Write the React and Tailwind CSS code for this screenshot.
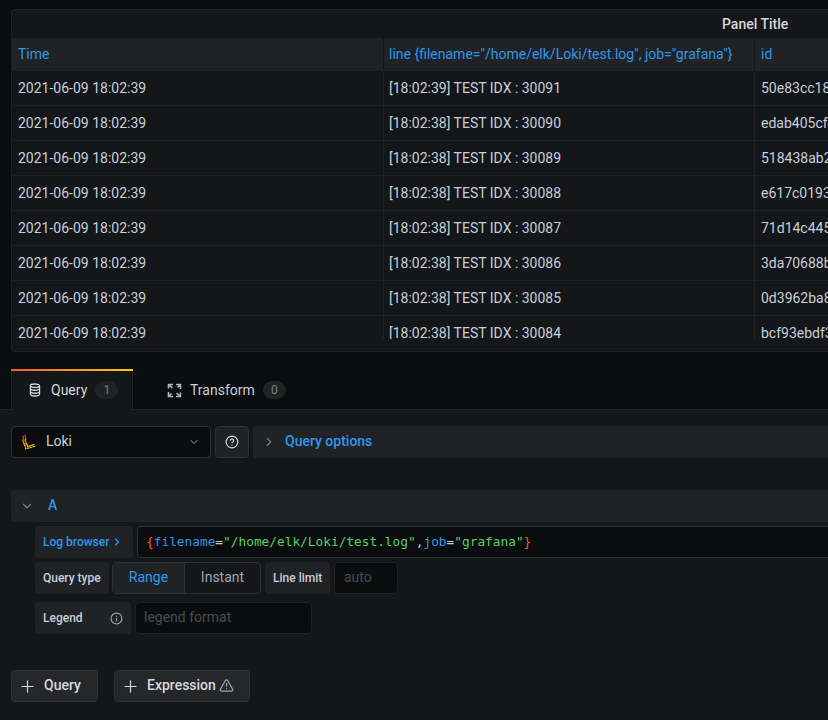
import React from "react";
import { ChevronDown, ChevronRight, CircleHelp, Info, Plus, TriangleAlert } from "lucide-react";

const rows = [
  ["[18:02:39] TEST IDX : 30091", "50e83cc18a1f"],
  ["[18:02:38] TEST IDX : 30090", "edab405cfb22"],
  ["[18:02:38] TEST IDX : 30089", "518438ab2c90"],
  ["[18:02:38] TEST IDX : 30088", "e617c0193d4e"],
  ["[18:02:38] TEST IDX : 30087", "71d14c4456ab"],
  ["[18:02:38] TEST IDX : 30086", "3da70688b1c7"],
  ["[18:02:38] TEST IDX : 30085", "0d3962ba8e10"],
  ["[18:02:38] TEST IDX : 30084", "bcf93ebdf3a2"],
];

const DatabaseIcon = () => (
  <svg width="12" height="14" viewBox="0 0 14 16" fill="none" stroke="currentColor" strokeWidth="1.5">
    <ellipse cx="7" cy="3" rx="5.3" ry="2" />
    <path d="M1.7 3v10c0 1.1 2.4 2 5.3 2s5.3-.9 5.3-2V3" />
    <path d="M1.7 6.3c0 1.1 2.4 2 5.3 2s5.3-.9 5.3-2M1.7 9.8c0 1.1 2.4 2 5.3 2s5.3-.9 5.3-2" />
  </svg>
);

const TransformIcon = () => (
  <svg width="15" height="15" viewBox="0 0 15 15" fill="none" stroke="#aeb4bb" strokeWidth="1.6">
    <path d="M1.5 5.5V1.5H6M5.5 5 2 1.8" />
    <path d="M9 1.5h4.5V6M13 1.8 10.5 4.5" />
    <path d="M13.5 9.5v4H9M9.5 10l3.5 3.2" />
    <path d="M6 13.5H1.5V9M2 13.2 4.5 10.5" />
  </svg>
);

const LokiIcon = () => (
  <svg width="15" height="16" viewBox="0 0 15 16" fill="none" strokeWidth="1.1">
    <path d="M2 1.5 3.2 8" stroke="#e8511f" />
    <path d="M4 0.5 5 6" stroke="#e8511f" />
    <path d="M1.5 5.5 3.6 12" stroke="#f0781c" />
    <path d="M4.2 5 5.6 11" stroke="#f4921a" />
    <path d="M3.6 9 4.7 15" stroke="#f6b015" />
    <path d="M5.6 9 6.8 13.5" stroke="#f8c312" />
    <path d="M4.5 15 14 12.3" stroke="#f5c814" />
    <path d="M6.5 12.6 13.4 10.6" stroke="#f2bd15" />
    <path d="M5 13.2l1 2M8 12.4l1 2M10.6 11.6l1 2" stroke="#141619" strokeWidth="0.5" />
  </svg>
);

const Label = ({ className, children }) => (
  <div className={`h-8 flex items-center rounded-sm bg-[#202226] text-xs font-medium ${className}`}>
    {children}
  </div>
);

const AddButton = ({ className, children }) => (
  <button className={`h-8 flex items-center rounded-sm border border-[#2c3235] bg-[#25272b] text-sm font-medium text-[#d8d9da] ${className}`}>
    {children}
  </button>
);

export default function App() {
  return (
    <div className="w-[828px] h-[720px] overflow-hidden bg-[#0b0c0e] font-['Roboto',sans-serif] text-sm text-[#c7d0d9]">
      {/* Table panel */}
      <div className="h-[369px] pt-[9px] pl-[11px]">
        <div className="w-[1100px] h-[343px] rounded-sm border border-[#202226] bg-[#141619] overflow-hidden">
          <div className="h-[28px] pl-[710px] flex items-center text-sm font-medium text-[#d8d9da] whitespace-nowrap">
            Panel Title
          </div>
          <div className="flex h-[33px] bg-[#202226] text-[#2d98ea]">
            <div className="w-[372px] flex items-center pl-[6px] pb-[1px] border-r border-[#141619]">Time</div>
            <div className="w-[371px] flex items-center pl-[5px] pb-[1px] border-r border-[#141619] whitespace-nowrap">
              {'line {filename="/home/elk/Loki/test.log", job="grafana"}'}
            </div>
            <div className="flex items-center pl-[6px] pb-[1px]">id</div>
          </div>
          <div className="h-[268px] overflow-hidden">
            {rows.map(([line, id]) => (
              <div key={id} className="flex h-[35px] border-b border-[#202226]">
                <div className="w-[372px] flex items-center pl-[6px] border-r border-[#202226]">2021-06-09 18:02:39</div>
                <div className="w-[371px] flex items-center pl-[5px] border-r border-[#202226]">{line}</div>
                <div className="pl-[6px] flex items-center">{id}</div>
              </div>
            ))}
          </div>
        </div>
      </div>

      {/* Tabs */}
      <div className="h-[41px] flex pl-[11px] border-b border-[#202226]">
        <div className="w-[122px] h-[41px] relative flex items-center pl-[17px] pt-[1px] bg-[#141619] border-x border-[#202226] rounded-t-sm text-[#d8d9da]">
          <div className="absolute -left-px -right-px top-0 h-[2px] bg-gradient-to-r from-[#f05a28] to-[#fbca0a]" />
          <DatabaseIcon />
          <span className="ml-[10px]">Query</span>
          <span className="ml-[8px] w-[23px] h-[18px] rounded-full bg-[#202226] text-xs flex items-center justify-center text-[#7b8087]">1</span>
        </div>
        <div className="h-[40px] flex items-center pl-[34px] pt-[2px] text-[#c7d0d9]">
          <TransformIcon />
          <span className="ml-[8px]">Transform</span>
          <span className="ml-[8px] w-[23px] h-[18px] rounded-full bg-[#202226] text-xs flex items-center justify-center text-[#7b8087]">0</span>
        </div>
      </div>

      {/* Query editor */}
      <div className="h-[310px] w-[1100px] bg-[#141619] pl-[11px] pt-[16px]">
        <div className="flex gap-[4px] h-8">
          <div className="w-[200px] flex items-center rounded-sm border border-[#2c3235] bg-[#0b0c0e] pl-[9px] pr-[10px]">
            <LokiIcon />
            <span className="ml-[10px] flex-1 pb-[2px] text-[#c7d0d9]">Loki</span>
            <ChevronDown size={12} className="text-[#9fa7b3]" />
          </div>
          <div className="w-[34px] flex items-center justify-center rounded-sm border border-[#2c3235] bg-[#202226] text-[#d8d9da]">
            <CircleHelp size={14} />
          </div>
          <div className="flex-1 flex items-center rounded-sm bg-[#202226] pl-[9px]">
            <ChevronRight size={14} className="text-[#7b8087]" />
            <span className="ml-[9px] pb-[2px] font-medium text-[#2d98ea]">Query options</span>
          </div>
        </div>

        <div className="mt-[32px] h-8 flex items-center rounded-sm bg-[#202226] pl-[9px]">
          <ChevronDown size={14} className="text-[#7b8087]" />
          <span className="ml-[14px] pb-[2px] font-medium text-[#2d98ea]">A</span>
        </div>

        <div className="pl-[24px] pt-[4px] flex flex-col gap-[4px]">
          <div className="flex gap-[4px]">
            <Label className="w-[98px] pl-[8px] text-[#2d98ea]">
              <span>Log browser</span>
              <ChevronRight size={12} strokeWidth={2.5} className="ml-[2px]" />
            </Label>
            <div className="flex-1 h-8 flex items-center rounded-sm border border-[#2c3235] bg-[#0b0c0e] pl-[8px] font-['DejaVu_Sans_Mono',monospace] text-[12.8px] whitespace-pre">
              <span className="text-[#ff5a1f]">{"{"}</span>
              <span className="text-[#2d98ea]">filename</span>
              <span className="text-[#c7d0d9]">=</span>
              <span className="text-[#56d364]">"/home/elk/Loki/test.log"</span>
              <span className="text-[#c7d0d9]">,</span>
              <span className="text-[#2d98ea]">job</span>
              <span className="text-[#c7d0d9]">=</span>
              <span className="text-[#56d364]">"grafana"</span>
              <span className="text-[#ff5a1f]">{"}"}</span>
            </div>
          </div>

          <div className="flex">
            <Label className="w-[74px] pl-[8px] text-[#c7d0d9]">Query type</Label>
            <div className="ml-[3px] w-[149px] h-8 flex rounded-sm border border-[#2c3235]">
              <div className="w-[72px] flex items-center justify-center pb-[2px] bg-[#202226] text-[#2d98ea] border-r border-[#2c3235]">Range</div>
              <div className="flex-1 flex items-center justify-center pb-[2px] text-[#9fa7b3]">Instant</div>
            </div>
            <Label className="ml-[4px] w-[65px] pl-[8px] text-[#c7d0d9]">Line limit</Label>
            <div className="ml-[4px] w-[64px] h-8 flex items-center rounded-sm border border-[#202226] bg-[#0b0c0e] pl-[9px] pb-[2px] text-[#464c54]">auto</div>
          </div>

          <div className="flex gap-[4px] mt-[4px]">
            <Label className="w-[96px] px-[8px] justify-between text-[#c7d0d9]">
              <span>Legend</span>
              <Info size={13} className="text-[#9fa7b3]" />
            </Label>
            <div className="w-[177px] h-8 flex items-center rounded-sm border border-[#202226] bg-[#0b0c0e] pl-[8px] pb-[2px] text-[#464c54]">legend format</div>
          </div>
        </div>

        <div className="mt-[36px] flex gap-[16px]">
          <AddButton className="w-[87px] pl-[6px]">
            <Plus size={19} strokeWidth={1.5} />
            <span className="ml-[7px] pb-[2px]">Query</span>
          </AddButton>
          <AddButton className="w-[136px] pl-[6px]">
            <Plus size={19} strokeWidth={1.5} />
            <span className="ml-[7px] pb-[2px]">Expression</span>
            <TriangleAlert size={15} className="ml-[3px] mb-[2px] text-[#9fa7b3]" />
          </AddButton>
        </div>
      </div>
    </div>
  );
}
